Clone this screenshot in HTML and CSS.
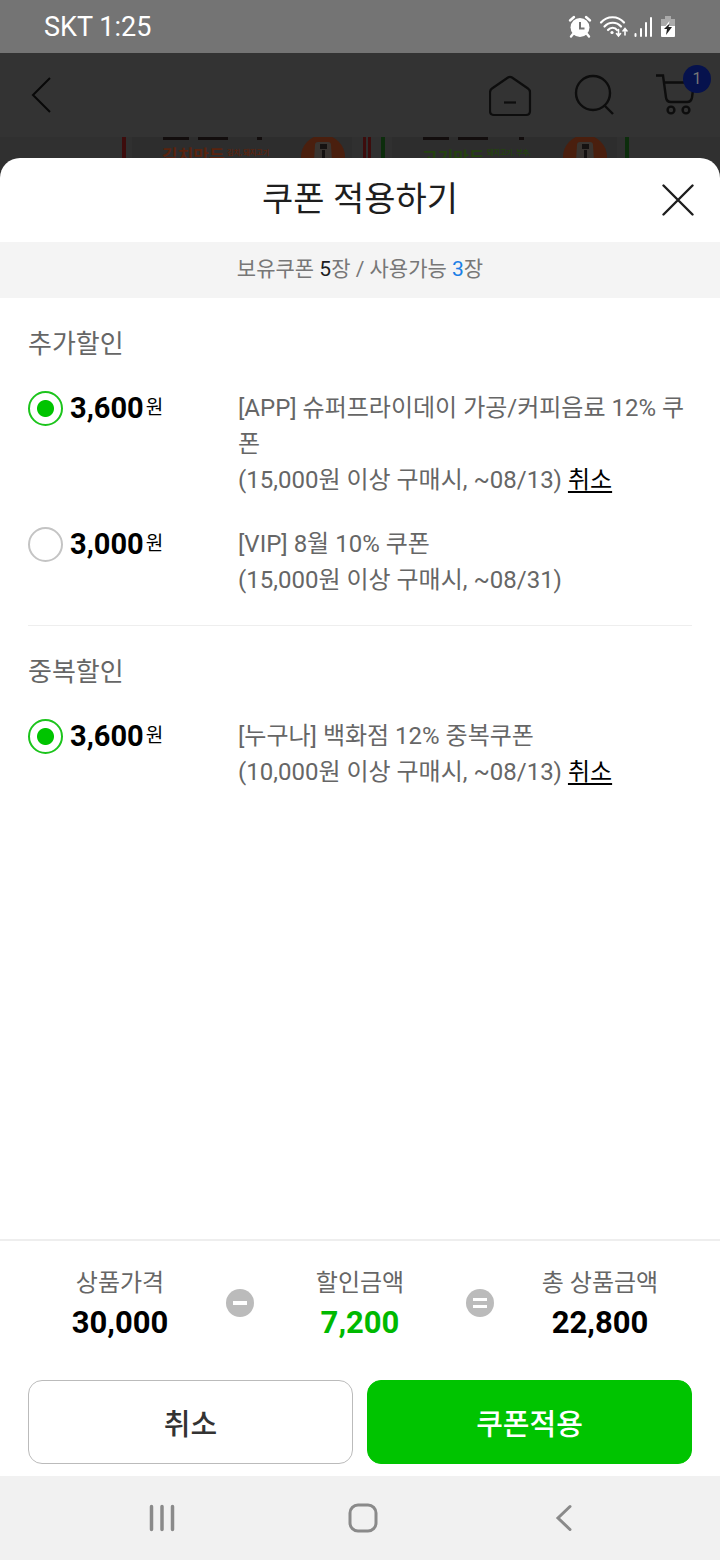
FILE: index.html
```html
<!DOCTYPE html>
<html lang="ko">
<head>
    <meta charset="UTF-8">
    <meta name="viewport" content="width=device-width, initial-scale=1.0">
    <title>쿠폰 적용하기</title>
    <link rel="stylesheet" href="styles.css">
</head>
<body>
    <div class="status-bar">
        <span>SKT 1:25</span>
        <div class="status-icons">
            <svg width="24" height="24" viewBox="0 0 24 24">
                <circle cx="12" cy="12.500" r="9.500" fill="#fff"/>
                <path d="M2 5.500 6 2M22 5.500 18 2M5 19l-2 2.500M19 19l2 2.500" stroke="#fff" stroke-width="2.400" stroke-linecap="round"/>
                <path d="M12 7v6.500h4.500" fill="none" stroke="#747474" stroke-width="2"/>
            </svg>
            <svg width="30" height="24" viewBox="0 0 30 24" fill="none" stroke="#fff" stroke-width="2.200" stroke-linecap="round">
                <path d="M3 7.500c6-7 17-7 23 0M6.500 11.500c4.500-5 12-5 16.500 0M10 15c2.500-3 7-3 9 0"/>
                <circle cx="14" cy="17.500" r="1.600" fill="#fff" stroke="none"/>
                <path d="M20.500 14.500v6M18.500 18.500l2 2.500 2-2.500M27 20v-6M25 16l2-2.500 2 2.500" stroke-width="1.600"/>
            </svg>
            <svg width="20" height="24" viewBox="0 0 20 24" stroke="#fff" stroke-width="2" stroke-linecap="round">
                <path d="M1.500 19v2M7 14v7M12 8v13M17 3v18"/>
            </svg>
            <svg width="16" height="24" viewBox="0 0 16 24">
                <path d="M5 1h6v3h4v8H1V4h4z" fill="#aaa"/>
                <path d="M1 11h14v10a1 1 0 0 1-1 1H2a1 1 0 0 1-1-1z" fill="#fff"/>
                <path d="M9.500 6 4 13h4" fill="#fff"/>
                <path d="M8 10 4 14h3l-1 6 6-8H8.500l1-3z" fill="#222"/>
            </svg>
        </div>
    </div>

    <!-- dimmed shop page behind the sheet -->
    <div class="behind">
        <div class="shop-header">
            <a href="#" class="back" aria-label="뒤로">
                <svg width="24" height="44" viewBox="0 0 24 44" fill="none" stroke="#080808" stroke-width="2">
                    <path d="M22 5 5 22l17 17"/>
                </svg>
            </a>
            <nav class="shop-icons">
                <a href="#" aria-label="홈">
                    <svg width="44" height="44" viewBox="0 0 44 44" fill="none" stroke="#0d0d0d" stroke-width="2.200" stroke-linejoin="round">
                        <path d="M1 19.500c0-2 .5-3 2-4L19 4.500c1.500-1 2.500-1 4 0l16 11c1.500 1 2 2 2 4V38c0 2.500-1 4-4 4H5c-3 0-4-1.500-4-4z"/>
                        <path d="M15 29.500h12"/>
                    </svg>
                </a>
                <a href="#" aria-label="검색">
                    <svg width="40" height="44" viewBox="0 0 40 44" fill="none" stroke="#0d0d0d" stroke-width="2.400">
                        <circle cx="19" cy="20" r="17"/>
                        <path d="m30 32 9 9"/>
                    </svg>
                </a>
                <a href="#" class="cart" aria-label="장바구니">
                    <svg width="56" height="44" viewBox="0 0 56 44" fill="none" stroke="#0d0d0d" stroke-width="2.400">
                        <path d="M1 2.500h7l3 22c.4 3 2 4.500 5 4.500h16c3 0 4.500-1.500 5-4.500l2-15H9"/>
                        <circle cx="16" cy="37" r="3.400"/>
                        <circle cx="31" cy="37" r="3.400"/>
                    </svg>
                    <span class="badge">1</span>
                </a>
            </nav>
        </div>
        <svg class="products" width="720" height="45" viewBox="0 0 720 45">
            <path d="M132 0h220v45H132zM392 0h225v45H392z" fill="#2d2d2d"/>
            <path d="M122 0h4v45h-4zM363 0h3v45h-3zM368 0h3v45h-3z" fill="#3d0c0c"/>
            <path d="M381 0h4v45h-4zM625 0h4v45h-4z" fill="#0c2d0c"/>
            <path d="M163 0h26v3h-26zM198 0h30v3h-30zM257 0h5v3h-5zM423 0h26v3h-26zM458 0h30v3h-30zM519 0h5v3h-5z" fill="#120d0d"/>
            <circle cx="323" cy="20" r="22" fill="#4a1f0e"/>
            <circle cx="585" cy="20" r="22" fill="#4a1f0e"/>
            <path d="M318 5h10q3 0 3 3l1 16h-18l1-16q0-3 3-3zM580 5h10q3 0 3 3l1 16h-18l1-16q0-3 3-3z" fill="#3a3531"/>
            <path d="M320 7h7v5h-7zM322 13h3v8h-3zM582 7h7v5h-7zM584 13h3v8h-3z" fill="#151211"/>
            <text x="162" y="25" class="name kimchi">김치만두</text>
            <text x="227" y="18" class="sub kimchi">김치, 돼지고기</text>
            <text x="422" y="27" class="name meat">고기만두</text>
            <text x="487" y="18" class="sub meat">돼지고기, 부추,</text>
        </svg>
    </div>

    <form class="sheet">
        <header class="sheet-header">
            <h1>쿠폰 적용하기</h1>
            <button type="button" class="close" aria-label="닫기">
                <svg width="32" height="32" viewBox="0 0 32 32" fill="none" stroke="#1e1e1e" stroke-width="2.400" stroke-linecap="round">
                    <path d="m1.500 1.500 29 29M30.500 1.500l-29 29"/>
                </svg>
            </button>
        </header>
        <p class="summary">보유쿠폰 <span class="owned">5</span>장 / 사용가능 <span class="usable">3</span>장</p>

        <main class="coupons">
            <section class="group">
                <h2>추가할인</h2>
                <div class="coupon">
                    <label class="price">
                        <input type="radio" name="extra" checked>
                        <span><b>3,600</b><small>원</small></span>
                    </label>
                    <p>[APP] 슈퍼프라이데이 가공/커피음료 12% 쿠폰<br>(15,000원 이상 구매시, ~08/13) <a href="#">취소</a></p>
                </div>
                <div class="coupon">
                    <label class="price">
                        <input type="radio" name="extra">
                        <span><b>3,000</b><small>원</small></span>
                    </label>
                    <p>[VIP] 8월 10% 쿠폰<br>(15,000원 이상 구매시, ~08/31)</p>
                </div>
            </section>
            <section class="group">
                <h2>중복할인</h2>
                <div class="coupon">
                    <label class="price">
                        <input type="radio" name="double" checked>
                        <span><b>3,600</b><small>원</small></span>
                    </label>
                    <p>[누구나] 백화점 12% 중복쿠폰<br>(10,000원 이상 구매시, ~08/13) <a href="#">취소</a></p>
                </div>
            </section>
        </main>

        <footer class="sheet-footer">
            <div class="totals">
                <div class="total">
                    <span>상품가격</span>
                    <strong>30,000</strong>
                </div>
                <svg width="28" height="28" viewBox="0 0 28 28">
                    <circle cx="14" cy="14" r="14" fill="#bbb"/>
                    <path d="M7 12h14v4H7z" fill="#fff"/>
                </svg>
                <div class="total discount">
                    <span>할인금액</span>
                    <strong>7,200</strong>
                </div>
                <svg width="28" height="28" viewBox="0 0 28 28">
                    <circle cx="14" cy="14" r="14" fill="#bbb"/>
                    <path d="M7 9h14v3H7zM7 16h14v3H7z" fill="#fff"/>
                </svg>
                <div class="total">
                    <span>총 상품금액</span>
                    <strong>22,800</strong>
                </div>
            </div>
            <div class="actions">
                <button type="button">취소</button>
                <button type="submit" class="apply">쿠폰적용</button>
            </div>
        </footer>
    </form>

    <nav class="nav-bar">
        <button type="button" aria-label="최근 앱">
            <svg width="30" height="30" viewBox="0 0 30 30" stroke="#8a8a8a" stroke-width="3.500" stroke-linecap="round">
                <path d="M4.500 3.500v23M15 3.500v23M25.500 3.500v23"/>
            </svg>
        </button>
        <button type="button" aria-label="홈">
            <svg width="30" height="30" viewBox="0 0 30 30" fill="none" stroke="#8a8a8a" stroke-width="3">
                <rect x="2" y="2" width="26" height="26" rx="8"/>
            </svg>
        </button>
        <button type="button" aria-label="뒤로">
            <svg width="30" height="30" viewBox="0 0 30 30" fill="none" stroke="#8a8a8a" stroke-width="3" stroke-linecap="round">
                <path d="M21 3.500 9 15l12 11.500"/>
            </svg>
        </button>
    </nav>
</body>
</html>
```
FILE: styles.css
```css
* {
    box-sizing: border-box;
}
body {
    display: flex;
    flex-direction: column;
    min-height: 100vh;
    margin: 0;
    background-color: #fff;
    color: #1e1e1e;
    font-family: Roboto, "Noto Sans CJK KR", sans-serif;
}
h1, h2, p {
    margin: 0;
    font-weight: 400;
}
svg {
    display: block;
    flex: none;
}
button {
    padding: 0;
    border: none;
    background: none;
    font-family: inherit;
    cursor: pointer;
}

/* status bar */
.status-bar {
    display: flex;
    align-items: center;
    justify-content: space-between;
    height: 53px;
    padding: 0 44px;
    background-color: #747474;
    color: #fff;
    font-size: 27px;
}
.status-icons {
    display: flex;
    gap: 6px;
}

/* page behind */
.behind {
    height: 129px;
    overflow: hidden;
    background-color: #303030;
}
.shop-header {
    display: flex;
    align-items: center;
    justify-content: space-between;
    height: 84px;
    padding: 0 9px 0 28px;
    background-color: #333;
}
.shop-icons {
    display: flex;
    gap: 41px;
}
.cart {
    position: relative;
}
.badge {
    position: absolute;
    top: -8px;
    right: 0;
    width: 28px;
    border-radius: 50%;
    background-color: #06124d;
    color: #777;
    font-size: 16px;
    line-height: 28px;
    text-align: center;
}
.products {
    margin: 0 auto;
}
.name {
    font-size: 17px;
    font-weight: 700;
}
.sub {
    font-size: 7px;
    font-weight: 700;
}
.kimchi {
    fill: #5a230d;
}
.meat {
    fill: #24420f;
}

/* bottom sheet */
.sheet {
    position: relative;
    display: flex;
    flex: 1;
    flex-direction: column;
    margin-top: -24px;
    border-radius: 20px 20px 0 0;
    background-color: #fff;
}
.sheet-header {
    position: relative;
    height: 84px;
    text-align: center;
}
.sheet-header h1 {
    font-size: 34px;
    line-height: 82px;
}
.close {
    position: absolute;
    top: 26px;
    right: 26px;
}
.summary {
    height: 56px;
    background-color: #f4f4f4;
    color: #777;
    font-size: 21px;
    line-height: 54px;
    text-align: center;
}
.owned {
    color: #1e1e1e;
}
.usable {
    color: #1a7fe6;
}

/* coupons */
.coupons {
    flex: 1;
    padding: 0 28px;
}
.group {
    padding: 28px 0 27px;
}
.group + .group {
    border-top: 1px solid #eee;
}
.group h2 {
    margin-bottom: 27px;
    color: #666;
    font-size: 26px;
    line-height: 36px;
}
.coupon {
    display: grid;
    grid-template-columns: 210px 1fr;
}
.coupon + .coupon {
    margin-top: 27px;
}
.coupon p {
    padding-top: 1px;
    color: #666;
    font-size: 24px;
    line-height: 36px;
}
.coupon a {
    color: #000;
    text-underline-offset: 3px;
}
.price {
    display: flex;
    align-items: center;
    gap: 7px;
    height: 38px;
    color: #000;
}
.price b {
    font-size: 29px;
}
.price small {
    margin-left: 2px;
    font-size: 19px;
    vertical-align: 4px;
}
.price input {
    appearance: none;
    width: 35px;
    height: 35px;
    margin: 0;
    border: 2px solid #c4c4c4;
    border-radius: 50%;
}
.price input:checked {
    border-color: #1cc41c;
    background: radial-gradient(circle, #00c400 8px, transparent 9px);
}

/* totals and buttons */
.sheet-footer {
    padding-bottom: 12px;
    border-top: 2px solid #eee;
}
.totals {
    display: flex;
    align-items: center;
    padding: 24px 14px 39px;
}
.total {
    display: flex;
    flex: 1;
    flex-direction: column;
    align-items: center;
    gap: 4px;
    line-height: 36px;
}
.total span {
    color: #666;
    font-size: 24px;
}
.total strong {
    color: #000;
    font-size: 31px;
}
.discount strong {
    color: #00b900;
}
.actions {
    display: flex;
    gap: 14px;
    padding: 0 28px;
}
.actions button {
    flex: 1;
    height: 84px;
    border: 1px solid #bbb;
    border-radius: 14px;
    color: #333;
    font-size: 29px;
    font-weight: 500;
}
.actions .apply {
    border-color: #00c400;
    background-color: #00c400;
    color: #fff;
}

/* system navigation */
.nav-bar {
    display: flex;
    height: 84px;
    padding: 0 56px 0 61px;
    background-color: #f1f1f1;
}
.nav-bar button {
    display: flex;
    flex: 1;
    align-items: center;
    justify-content: center;
}
```
